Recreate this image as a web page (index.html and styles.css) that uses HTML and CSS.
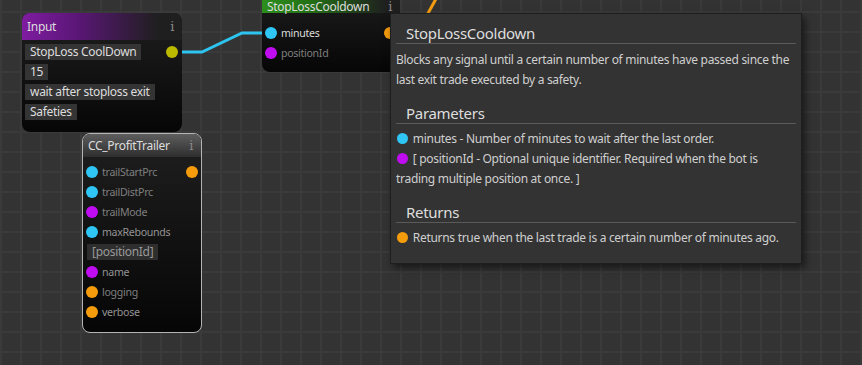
FILE: index.html
```html
<!DOCTYPE html>
<html>
<head>
<meta charset="utf-8">
<link rel="stylesheet" href="styles.css">
</head>
<body>
<div class="canvas">
  <svg class="wires" width="862" height="365" viewBox="0 0 862 365">
    <polyline points="178,52 202,52 242,33 270,33" fill="none" stroke="#2ec4f0" stroke-width="3"/>
    <line x1="426" y1="17" x2="437" y2="-3" stroke="#f39c12" stroke-width="3"/>
  </svg>

  <div class="node node-input">
    <div class="node-head head-purple"><span class="title">Input</span><span class="info">i</span></div>
    <div class="node-body fields">
      <div class="field-row"><span class="field">StopLoss CoolDown</span><span class="dot dot-yellow out"></span></div>
      <div class="field-row"><span class="field">15</span></div>
      <div class="field-row"><span class="field">wait after stoploss exit</span></div>
      <div class="field-row"><span class="field">Safeties</span></div>
    </div>
  </div>

  <div class="node node-slc">
    <div class="node-head head-green"><span class="title">StopLossCooldown</span><span class="info">i</span></div>
    <div class="node-body ports">
      <div class="port"><span class="dot dot-cyan"></span><span class="label bright">minutes</span><span class="dot dot-orange out"></span></div>
      <div class="port"><span class="dot dot-purple"></span><span class="label">positionId</span></div>
    </div>
  </div>

  <div class="node node-cc">
    <div class="node-head head-grey"><span class="title">CC_ProfitTrailer</span><span class="info">i</span></div>
    <div class="node-body ports">
      <div class="port"><span class="dot dot-cyan"></span><span class="label">trailStartPrc</span><span class="dot dot-orange out"></span></div>
      <div class="port"><span class="dot dot-cyan"></span><span class="label">trailDistPrc</span></div>
      <div class="port"><span class="dot dot-purple"></span><span class="label">trailMode</span></div>
      <div class="port"><span class="dot dot-cyan"></span><span class="label mid">maxRebounds</span></div>
      <div class="port field-port"><span class="field dim">[positionId]</span></div>
      <div class="port"><span class="dot dot-purple"></span><span class="label mid">name</span></div>
      <div class="port"><span class="dot dot-orange"></span><span class="label">logging</span></div>
      <div class="port"><span class="dot dot-orange"></span><span class="label mid">verbose</span></div>
    </div>
  </div>

  <div class="tooltip">
    <div class="tt-head">StopLossCooldown</div>
    <p class="tt-text">Blocks any signal until a certain number of minutes have passed since the last exit trade executed by a safety.</p>
    <div class="tt-head tt-section">Parameters</div>
    <p class="tt-text"><span class="tdot dot-cyan"></span> minutes - Number of minutes to wait after the last order.<br><span class="tdot dot-purple"></span> [ positionId - Optional unique identifier. Required when the bot is trading multiple position at once. ]</p>
    <div class="tt-head tt-section">Returns</div>
    <p class="tt-text"><span class="tdot dot-orange"></span> Returns true when the last trade is a certain number of minutes ago.</p>
  </div>
</div>
</body>
</html>
```
FILE: styles.css
```css
html, body {
  margin: 0;
  padding: 0;
  background: #333;
}
.canvas {
  position: relative;
  width: 862px;
  height: 365px;
  overflow: hidden;
  background-color: #333333;
  background-image:
    linear-gradient(to right, #3a3a3a 2px, transparent 2px),
    linear-gradient(to bottom, #3a3a3a 2px, transparent 2px);
  background-size: 20px 20px;
  background-position: 0 11px;
  font-family: "Noto Sans", "Open Sans", sans-serif;
  font-size: 12px;
  letter-spacing: -0.3px;
  color: #ddd;
}
.wires {
  position: absolute;
  left: 0;
  top: 0;
}
.node {
  position: absolute;
  border-radius: 8px;
  background: linear-gradient(to bottom, #1f1f1f, #060606);
  box-sizing: border-box;
  display: flex;
  flex-direction: column;
}
.node-head {
  display: flex;
  align-items: center;
  justify-content: space-between;
  padding: 0 8px 0 5px;
  border-radius: 8px 8px 0 0;
  flex: none;
  box-sizing: border-box;
}
.title {
  color: #ddd;
  font-size: 12px;
}
.info {
  font-family: "DejaVu Serif", serif;
  color: #8a8a8a;
  font-size: 13px;
}
.head-purple {
  height: 27px;
  background: linear-gradient(to right, #7f1ca0 0%, #5a1676 35%, #1f1f1f 85%);
}
.head-green {
  height: 27px;
  padding-top: 14px;
  background: linear-gradient(to right, #2c8f1d 0%, #247016 35%, #1f1f1f 90%);
}
.head-grey {
  height: 23px;
  border-radius: 7px 7px 0 0;
  background: linear-gradient(to bottom, #5e5e5e, #2e2e2e);
}
.node-input {
  left: 22px;
  top: 13px;
  width: 160px;
  height: 119px;
}
.node-slc {
  left: 262px;
  top: -14px;
  width: 138px;
  height: 86px;
}
.node-cc {
  left: 82px;
  top: 133px;
  width: 120px;
  height: 200px;
  border: 1px solid #b4b4b4;
}
.fields {
  display: flex;
  flex-direction: column;
  gap: 4px;
  padding: 4px 4px 0 3px;
}
.field-row {
  display: flex;
  align-items: center;
  justify-content: space-between;
  height: 16px;
}
.field {
  background: #343434;
  color: #ddd;
  height: 16px;
  line-height: 16px;
  padding: 0 5px;
  white-space: nowrap;
}
.field.dim {
  color: #999;
  background: #2e2e2e;
}
.ports {
  display: flex;
  flex-direction: column;
  padding: 10px 4px 0 3px;
}
.node-cc .ports {
  padding: 5px 3px 0 3px;
}
.port {
  display: flex;
  align-items: center;
  height: 20px;
}
.field-port {
  padding-left: 1px;
}
.dot {
  width: 12px;
  height: 12px;
  border-radius: 50%;
  flex: none;
}
.out {
  margin-left: auto;
}
.label {
  color: #7f7f7f;
  margin-left: 4px;
  white-space: nowrap;
  font-size: 10.6px;
}
.label.bright {
  color: #dcdcdc;
}
.label.mid {
  color: #939393;
}
.dot-yellow { background: #bcba00; }
.dot-cyan { background: #2fc6f5; }
.dot-purple { background: #c00cf0; }
.dot-orange { background: #f59c0c; }
.tooltip {
  position: absolute;
  left: 390px;
  top: 13px;
  width: 412px;
  height: 251px;
  box-sizing: border-box;
  background: #333333;
  border: 1px solid #1e1e1e;
  box-shadow: 3px 4px 8px rgba(0, 0, 0, 0.55);
  padding: 9px 5px 0 5px;
  color: #cfcfcf;
}
.tt-head {
  font-size: 15px;
  color: #dedede;
  padding: 0 0 0 10px;
  border-bottom: 1px solid #5a5a5a;
  line-height: 20px;
}
.tt-section {
  margin-top: 13px;
}
.tt-text {
  margin: 6px 0 0 0;
  font-size: 12px;
  line-height: 20px;
}
.tt-section + .tt-text {
  margin-top: 5px;
}
.tdot {
  display: inline-block;
  width: 11px;
  height: 11px;
  border-radius: 50%;
  vertical-align: -1px;
  margin-left: 1px;
  margin-right: 2px;
}
```
